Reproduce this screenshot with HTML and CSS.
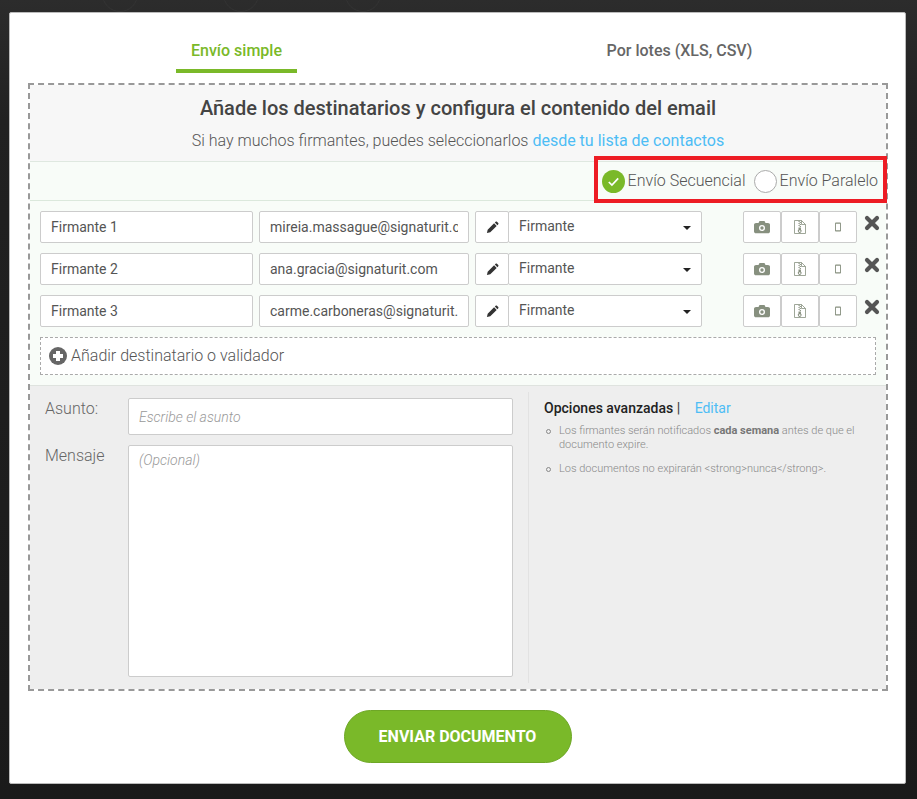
FILE: index.html
```html
<!DOCTYPE html>
<html lang="es">
<head>
    <meta charset="UTF-8">
    <title>Enviar documento</title>
    <link rel="stylesheet" href="styles.css">
</head>
<body>
    <div class="backdrop-circles">
        <span></span><span></span><span></span>
    </div>

    <svg class="icon-defs" width="0" height="0">
        <symbol id="i-pencil" viewBox="0 0 14 14">
            <path d="M1 13l.8-3.600 6.900-6.900 2.800 2.800-6.900 6.900zM9.500 1.700l.9-.9c.4-.4 1-.4 1.400 0l1.400 1.400c.4.4.4 1 0 1.400l-.9.9z"/>
        </symbol>
        <symbol id="i-camera" viewBox="0 0 16 14">
            <path fill-rule="evenodd" d="M5.500 1h5l1 2H14c1 0 2 .7 2 1.800v6.700c0 1-.9 1.800-2 1.800H2c-1.100 0-2-.8-2-1.800V4.800C0 3.700 1 3 2 3h2.500zM8 5a3 3 0 1 0 0 6 3 3 0 0 0 0-6zm0 1.300a1.700 1.700 0 1 1 0 3.400 1.700 1.700 0 0 1 0-3.400z"/>
        </symbol>
        <symbol id="i-zip" viewBox="0 0 12 14">
            <path fill="none" stroke="#87907f" stroke-width=".8" d="M.5.500h7l4 4v9H.5zM7.500.5v4h4"/>
            <path d="M4.500 1h1.200v1H4.500zM5.700 2h1.200v1H5.700zM4.500 3h1.200v1H4.500zM5.700 4h1.200v1H5.700zM4.500 5h1.200v1H4.500zM5.700 6h1.200v1H5.700z"/>
            <path fill-rule="evenodd" d="M4.500 7.500h2.400v1.900a1.900 1.900 0 1 1-2.400 0zM5.700 10.200a.9.9 0 1 0 0 1.800.9.9 0 0 0 0-1.800z"/>
        </symbol>
        <symbol id="i-mobile" viewBox="0 0 8 12">
            <path fill-rule="evenodd" d="M1.500 0h5C7.300 0 8 .7 8 1.500v9c0 .8-.7 1.500-1.500 1.500h-5C.7 12 0 11.300 0 10.500v-9C0 .7.700 0 1.500 0zM1.200 1.800v8.400h5.600V1.800z"/>
        </symbol>
        <symbol id="i-close" viewBox="0 0 16 16">
            <path d="M3 3l10 10M13 3L3 13" fill="none" stroke="currentColor" stroke-width="4.200" stroke-linecap="round"/>
        </symbol>
    </svg>

    <div class="modal">
        <nav class="tabs">
            <div class="tab"><a class="tab-link active">Envío simple</a></div>
            <div class="tab"><a class="tab-link">Por lotes (XLS, CSV)</a></div>
        </nav>

        <section class="dropzone">
            <header class="intro">
                <h1>Añade los destinatarios y configura el contenido del email</h1>
                <p>Si hay muchos firmantes, puedes seleccionarlos <a>desde tu lista de contactos</a></p>
            </header>

            <div class="recipients">
                <div class="send-mode">
                    <label class="radio">
                        <span class="radio-mark checked">
                            <svg viewBox="0 0 22 22" width="23" height="23"><path d="M6.500 11.500l3 3 6-6.500" fill="none" stroke="#fff" stroke-width="1.600"/></svg>
                        </span>
                        <span class="radio-text">Envío Secuencial</span>
                    </label>
                    <label class="radio">
                        <span class="radio-mark"></span>
                        <span class="radio-text">Envío Paralelo</span>
                    </label>
                    <div class="highlight"></div>
                </div>

                <div class="signer">
                    <input class="field name" value="Firmante 1">
                    <input class="field email" value="mireia.massague@signaturit.com">
                    <button class="edit"><svg class="ico"><use href="#i-pencil"/></svg></button>
                    <div class="role">Firmante<i class="caret"></i></div>
                    <div class="methods">
                        <button><svg class="ico cam"><use href="#i-camera"/></svg></button>
                        <button><svg class="ico zip"><use href="#i-zip"/></svg></button>
                        <button><svg class="ico mob"><use href="#i-mobile"/></svg></button>
                    </div>
                    <svg class="remove"><use href="#i-close"/></svg>
                </div>
                <div class="signer">
                    <input class="field name" value="Firmante 2">
                    <input class="field email" value="ana.gracia@signaturit.com">
                    <button class="edit"><svg class="ico"><use href="#i-pencil"/></svg></button>
                    <div class="role">Firmante<i class="caret"></i></div>
                    <div class="methods">
                        <button><svg class="ico cam"><use href="#i-camera"/></svg></button>
                        <button><svg class="ico zip"><use href="#i-zip"/></svg></button>
                        <button><svg class="ico mob"><use href="#i-mobile"/></svg></button>
                    </div>
                    <svg class="remove"><use href="#i-close"/></svg>
                </div>
                <div class="signer">
                    <input class="field name" value="Firmante 3">
                    <input class="field email" value="carme.carboneras@signaturit.com">
                    <button class="edit"><svg class="ico"><use href="#i-pencil"/></svg></button>
                    <div class="role">Firmante<i class="caret"></i></div>
                    <div class="methods">
                        <button><svg class="ico cam"><use href="#i-camera"/></svg></button>
                        <button><svg class="ico zip"><use href="#i-zip"/></svg></button>
                        <button><svg class="ico mob"><use href="#i-mobile"/></svg></button>
                    </div>
                    <svg class="remove"><use href="#i-close"/></svg>
                </div>

                <div class="add-recipient">
                    <span class="plus"></span>
                    Añadir destinatario o validador
                </div>
            </div>

            <div class="content">
                <div class="compose">
                    <div class="compose-row">
                        <label>Asunto:</label>
                        <input class="subject" placeholder="Escribe el asunto">
                    </div>
                    <div class="compose-row grow">
                        <label>Mensaje</label>
                        <textarea class="message" placeholder="(Opcional)"></textarea>
                    </div>
                </div>
                <aside class="advanced">
                    <h3>Opciones avanzadas <span class="sep">|</span> <a>Editar</a></h3>
                    <ul>
                        <li>Los firmantes serán notificados <strong>cada semana</strong> antes de que el documento expire.</li>
                        <li>Los documentos no expirarán &lt;strong&gt;nunca&lt;/strong&gt;.</li>
                    </ul>
                </aside>
            </div>
        </section>

        <div class="actions">
            <button class="send">ENVIAR DOCUMENTO</button>
        </div>
    </div>
</body>
</html>
```

FILE: styles.css
```css
html, body {
    margin: 0;
    padding: 0;
    height: 100%;
}

body {
    background: linear-gradient(#2c2c2c, #212121 120px, #1a1a1a);
    font-family: Roboto, "Liberation Sans", sans-serif;
    color: #444;
    overflow: hidden;
    position: relative;
}

.icon-defs {
    position: absolute;
}

.backdrop-circles span {
    position: absolute;
    top: -24px;
    width: 34px;
    height: 34px;
    border: 1px solid #343434;
    border-radius: 50%;
}

.backdrop-circles span:nth-child(1) { left: 102px; }
.backdrop-circles span:nth-child(2) { left: 223px; }
.backdrop-circles span:nth-child(3) { left: 345px; }

.modal {
    position: relative;
    box-sizing: border-box;
    width: 897px;
    height: 772px;
    margin-left: 9px;
    top: 12px;
    background: #fff;
    border: 1px solid #bbb;
    border-radius: 2px;
}

/* tabs */
.tabs {
    display: grid;
    grid-template-columns: 443px 443px;
    padding: 0 5px;
    height: 70px;
}

.tab {
    text-align: center;
}

.tab-link {
    display: inline-block;
    box-sizing: border-box;
    height: 60px;
    padding: 29px 15px 0;
    font-size: 16px;
    font-weight: 500;
    line-height: 18px;
    color: #666;
}

.tab-link.active {
    color: #7ab929;
    border-bottom: 4px solid #7ab929;
}

/* dashed container */
.dropzone {
    box-sizing: border-box;
    width: 860px;
    height: 608px;
    margin-left: 18px;
    border: 2px dashed #999;
    display: flex;
    flex-direction: column;
}

.intro {
    background: #f7f7f7;
    height: 76px;
    text-align: center;
    border-bottom: 1px solid #dfe8e0;
}

.intro h1 {
    margin: 0;
    padding-top: 11px;
    font-size: 20px;
    line-height: 24px;
    font-weight: 500;
    color: #444;
}

.intro p {
    margin: 10px 0 0;
    font-size: 16px;
    line-height: 22px;
    font-weight: 300;
    color: #555;
}

.intro a {
    color: #4dbdf5;
    font-weight: 400;
}

.recipients {
    background: #f8fcf8;
    height: 224px;
    box-sizing: border-box;
    border-bottom: 1px solid #dfe3df;
}

.send-mode {
    position: relative;
    display: flex;
    justify-content: flex-end;
    align-items: center;
    gap: 8px;
    height: 38px;
    padding-right: 8px;
    border-bottom: 1px solid #dbe8dc;
}

.radio {
    display: flex;
    align-items: center;
    gap: 3px;
    font-size: 16px;
    font-weight: 300;
    color: #555;
}

.radio-text {
    padding-bottom: 2px;
}

.radio-mark {
    display: block;
    box-sizing: border-box;
    width: 23px;
    height: 23px;
    border: 1px solid #aaa;
    border-radius: 50%;
    background: #fff;
}

.radio-mark.checked {
    background: #7ab929;
    border: 0;
}

.radio-mark svg {
    display: block;
}

.highlight {
    position: absolute;
    right: -1px;
    top: -6px;
    width: 293px;
    height: 47px;
    box-sizing: border-box;
    border: 4px solid #ed1c24;
}

/* signers */
.signer {
    display: flex;
    align-items: flex-start;
    height: 32px;
    margin: 10px 0 0 10px;
}

.field, .role, .subject, .message, .signer button {
    box-sizing: border-box;
    background: #fff;
    border: 1px solid #ccc;
    border-radius: 2px;
    font-family: inherit;
}

.field {
    height: 32px;
    padding: 0 10px;
    font-size: 14px;
    color: #555;
    outline: none;
}

.name {
    width: 213px;
    margin-right: 6px;
}

.email {
    width: 210px;
    margin-right: 6px;
}

.signer button {
    height: 32px;
    padding: 0;
    display: flex;
    align-items: center;
    justify-content: center;
}

.edit {
    width: 34px;
}

.role {
    position: relative;
    width: 194px;
    height: 32px;
    margin-left: -1px;
    padding-left: 10px;
    font-size: 14px;
    line-height: 28px;
    color: #555;
}

.caret {
    position: absolute;
    right: 10px;
    top: 14px;
    border: 4px solid transparent;
    border-top-color: #222;
    border-bottom: 0;
}

.methods {
    display: flex;
    margin-left: 41px;
}

.methods button {
    width: 38px;
}

.ico {
    display: block;
    width: 13px;
    height: 13px;
    fill: #333;
}

.ico.cam {
    width: 16px;
    height: 14px;
    fill: #87907f;
}

.ico.zip {
    width: 12px;
    height: 14px;
    fill: #87907f;
}

.ico.mob {
    width: 6px;
    height: 10px;
    fill: #87907f;
}

.remove {
    width: 16px;
    height: 16px;
    margin: 4px 0 0 7px;
    color: #555;
}

.add-recipient {
    display: flex;
    align-items: center;
    gap: 4px;
    box-sizing: border-box;
    width: 836px;
    height: 38px;
    margin: 10px 0 0 10px;
    padding: 0 0 1px 8px;
    background: #fff;
    border: 1px dashed #aaa;
    font-size: 16px;
    font-weight: 300;
    color: #555;
}

.plus {
    position: relative;
    width: 18px;
    height: 18px;
    border-radius: 50%;
    background: #666;
}

.plus::before, .plus::after {
    content: "";
    position: absolute;
    background: #fff;
}

.plus::before {
    left: 4px;
    top: 7px;
    width: 10px;
    height: 4px;
}

.plus::after {
    left: 7px;
    top: 4px;
    width: 4px;
    height: 10px;
}

/* subject, message and options */
.content {
    flex: 1;
    display: flex;
    background: #eee;
    padding: 6px 0;
}

.compose {
    box-sizing: border-box;
    width: 499px;
    padding: 6px 15px 0 15px;
    display: flex;
    flex-direction: column;
    gap: 10px;
    border-right: 1px solid #e2e2e2;
}

.compose-row {
    display: flex;
}

.compose-row.grow {
    flex: 1;
    margin-bottom: 6px;
}

.compose-row label {
    width: 83px;
    flex: none;
    padding-top: 1px;
    font-size: 16px;
    font-weight: 300;
    color: #666;
    line-height: 20px;
}

.subject {
    width: 385px;
    height: 37px;
    padding: 0 10px;
    font-size: 14px;
    font-style: italic;
    outline: none;
}

.message {
    width: 385px;
    padding: 6px 10px;
    font-size: 14px;
    font-style: italic;
    resize: none;
    outline: none;
}

.subject::placeholder, .message::placeholder {
    color: #999;
    font-weight: 300;
    opacity: 1;
}

.advanced {
    flex: 1;
    padding: 7px 24px 0 15px;
}

.advanced h3 {
    margin: 0;
    font-size: 14px;
    line-height: 18px;
    font-weight: 500;
    color: #222;
}

.advanced a {
    color: #4dbdf5;
    font-weight: 400;
}

.advanced .sep {
    color: #444;
    margin-right: 11px;
}

.advanced ul {
    list-style: none;
    margin: 7px 0 0;
    padding: 0 0 0 15px;
    font-size: 11px;
    line-height: 14px;
    font-weight: 300;
    color: #888;
}

.advanced li {
    position: relative;
    margin-bottom: 10px;
}

.advanced li::before {
    content: "";
    position: absolute;
    left: -13px;
    top: 5px;
    width: 3px;
    height: 3px;
    border: 1px solid #888;
    border-radius: 50%;
}

.advanced strong {
    font-weight: 700;
    color: #777;
}

/* send button */
.actions {
    display: flex;
    justify-content: center;
    padding-top: 19px;
}

.send {
    width: 228px;
    height: 53px;
    background: #7ab929;
    border: 1px solid #6ea726;
    border-radius: 27px;
    color: #fff;
    font-family: inherit;
    font-size: 16px;
    font-weight: 700;
}
```
